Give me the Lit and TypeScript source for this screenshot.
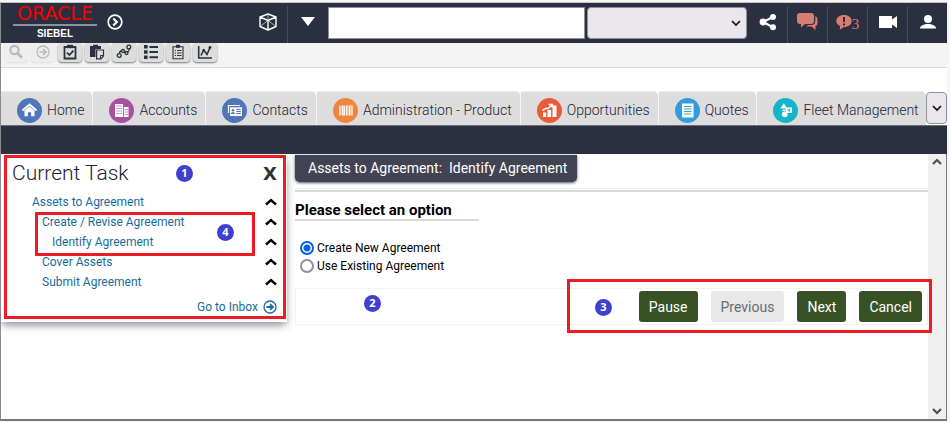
import { LitElement, html, css, svg, nothing } from "lit";
import { customElement, property, state } from "lit/decorators.js";
import { classMap } from "lit/directives/class-map.js";

const chevronUp = html`<svg width="12" height="8" viewBox="0 0 12 8" aria-hidden="true">
  <path d="M1 6.5 6 2l5 4.500" fill="none" stroke="#000" stroke-width="2.400" />
</svg>`;

const chevron = (down: boolean) => html`<svg width="10" height="8" viewBox="0 0 10 8" aria-hidden="true">
  <path d=${down ? "M1 2l4 4 4-4" : "M1 6l4-4 4 4"} fill="none" stroke="#505050" stroke-width="2.200" />
</svg>`;

const toolIcons = {
  search: svg`<circle cx="6.500" cy="6" r="4.200" fill="none" stroke="currentColor" stroke-width="2.200"/><path d="M9.500 9.200l4.500 4.600" stroke="currentColor" stroke-width="2.800"/>`,
  go: svg`<circle cx="8" cy="8" r="6" fill="none" stroke="currentColor" stroke-width="1.300"/><path d="M4.500 8h6M8 5.200 11 8l-3 2.800" fill="none" stroke="currentColor" stroke-width="1.600"/>`,
  check: svg`<path d="M2.500 3h11v11.500h-11z" fill="none" stroke="currentColor" stroke-width="1.800"/><path d="M5 .800h6v3.400H5z" fill="currentColor"/><path d="M5 8.600l2.400 2.500L11.400 6.600" fill="none" stroke="currentColor" stroke-width="1.700"/>`,
  paste: svg`<path d="M1 2h3V.800h5V2h3v3H6.500v8H1z" fill="currentColor"/><path d="M7.600 6h6.900v6l-2.600 2.800H7.600z" fill="#ddd" stroke="currentColor" stroke-width="1.200"/><path d="M11.500 14.500v-3h3" fill="none" stroke="currentColor"/>`,
  flow: svg`<g fill="none" stroke="currentColor" stroke-width="1.300"><circle cx="3.200" cy="11.500" r="1.900"/><circle cx="7" cy="7" r="1.500"/><circle cx="10.500" cy="9" r="1.500"/><circle cx="12.800" cy="3" r="1.900"/><path d="M3.500 9.500C3.500 7.500 4.500 7 5.500 7M8 8.200l1.200.500M11.600 8c1.800-.800 1.600-2 1.400-3"/></g>`,
  list: svg`<g fill="currentColor"><path d="M1 1h3.600v3.600H1zM1 6.200h3.600v3.600H1zM1 11.400h3.600V15H1zM6.400 2h8.600v2H6.400zM6.400 7.100h8.600v2H6.400zM6.400 12.300h8.600v2H6.400z"/></g>`,
  report: svg`<path d="M3 2.700h10v12H3z" fill="none" stroke="currentColor" stroke-width="1.100"/><path d="M6 .800h4v3H6z" fill="currentColor"/><path d="M4.800 6.500h1.200M7 6.500h4.500M4.800 9h1.200M7 9h4.500M4.800 11.500h1.200M7 11.500h4.500" stroke="currentColor"/>`,
  chart: svg`<path d="M1.700 2v12H15" fill="none" stroke="currentColor" stroke-width="1.600"/><path d="M4 11.500 6.700 6l3.300 4.500L13 3.500" fill="none" stroke="currentColor" stroke-width="1.600"/><circle cx="13" cy="3.500" r="1.400" fill="currentColor"/><circle cx="6.700" cy="6.200" r="1.300" fill="currentColor"/>`,
};

const tabIcons = {
  home: svg`<path d="M5.500 12.500 12.500 6.500l7 6" fill="none" stroke="#fff" stroke-width="1.900"/><path d="M7.500 12.600 12.500 8.500l5 4.100v5.700h-3.400v-4.100h-3.200v4.100H7.500z" fill="#fff"/>`,
  accounts: svg`<path d="M6 6h8v13H6zM14.800 9h4.700v10h-4.700z" fill="#fff"/><path d="M7.500 8h1.200M9.500 8h1.200M11.500 8h1.200M7.500 10.500h1.200M9.500 10.500h1.200M11.500 10.500h1.200M7.500 13h1.200M9.500 13h1.200M11.500 13h1.200M7.500 15.500h1.200M9.500 15.500h1.200M11.500 15.500h1.200M15.600 11.500h1.100M17.500 11.500h1.100M15.600 14h1.100M17.500 14h1.100M15.600 16.500h1.100M17.500 16.500h1.100" stroke="#a8529f" stroke-width="1"/>`,
  contacts: svg`<path d="M6.500 15V7.500H18" fill="none" stroke="#fff" stroke-width="1.200"/><path d="M8 9.300h12v8.700H8z" fill="#fff"/><circle cx="10.900" cy="12.300" r="1.300" fill="#4f76b9"/><path d="M9 16c0-2.800 3.800-2.800 3.800 0zM14.300 11h4.400v1h-4.400zM14.300 13h4.400v1h-4.400zM14.300 15h4.400v1h-4.400z" fill="#4f76b9"/>`,
  product: svg`<path d="M7 7.500v10M9.300 7.500v10M11.300 7.500v10M13.600 7.500v10M16.500 7.500v10M19 7.500v10" stroke="#fff" stroke-width="1.300"/><path d="M10.300 7.500v10M15 7.500v10M17.800 7.500v10" stroke="#fff" stroke-width=".600"/>`,
  opportunities: svg`<path d="M6 14.500h3.200v4.500H6zM10.500 12h3.600v7h-3.600zM15.500 7.500h4V19h-4z" fill="#fff"/><path d="M5.500 12.500 9 10.200l2 .300L15 7M11.500 6.500h4v3" fill="none" stroke="#fff" stroke-width="1.500"/>`,
  quotes: svg`<path d="M7 5.500h11.500v14H7z" fill="#fff"/><path d="M9 8.500h7.500M9 11h7.500M9 13.500h7.500M9 16h7.500" stroke="#349bdc" stroke-width="1.100"/>`,
  fleet: svg`<path d="M10.800 5.300l3.400 5.200H7.400z" fill="#fff"/><path d="M13 9.500h6v5.500h-6z" fill="#fff"/><path d="M14.500 11h2.600v2.300h-2.600z" fill="#14b5cb"/><circle cx="11.800" cy="16.300" r="2.900" fill="#fff"/><path d="M9.500 12.300h6" stroke="#fff" stroke-width="1.600"/>`,
};

type ToolName = keyof typeof toolIcons;
type TabName = keyof typeof tabIcons;

@customElement("siebel-header")
class SiebelHeader extends LitElement {
  static styles = css`
    :host { display: flex; height: 40px; background: #2a3040; color: #fff; }
    .brand { display: flex; flex: none; align-items: center; width: 246px; box-sizing: border-box; padding-left: 12px; padding-bottom: 2px; gap: 10px; }
    .logo { display: flex; flex-direction: column; align-items: center; width: 84px; padding-top: 2px; }
    .oracle { font: 19px/18px "DejaVu Sans", sans-serif; color: #f80000; }
    .siebel { align-self: stretch; border-top: 2px solid #8d929e; margin-top: 2px; text-align: center; font: bold 10px/16px "Liberation Sans", sans-serif; }
    button { all: unset; box-sizing: border-box; display: flex; align-items: center; justify-content: center; cursor: pointer; }
    .cell { flex: none; width: 40px; height: 37px; margin-top: 3px; padding-bottom: 6px; border-left: 1px solid #454c5c; }
    .plain { border-left-color: transparent; }
    .alert { color: #d87d71; font: 15px/16px "Liberation Serif", serif; }
    .count { margin-top: 4px; }
    .query { flex: 1; min-width: 0; box-sizing: border-box; height: 32px; margin: 4px 2px 0 1px; border: 1px solid #8f8f9d; background: #fff; }
    .scope { flex: none; box-sizing: border-box; width: 160px; height: 32px; margin-top: 4px; }
    .picker { position: relative; display: flex; }
    select { appearance: none; border: 1px solid #8f8f9d; border-radius: 4px; background: #e9e7ec; padding: 0 24px 0 8px; }
    .arrow { position: absolute; right: 6px; top: 17px; pointer-events: none; }
  `;

  render() {
    return html`
      <div class="brand">
        <div class="logo"><span class="oracle">ORACLE</span><span class="siebel">SIEBEL</span></div>
        <button aria-label="Expand">
          <svg width="16" height="16" viewBox="0 0 16 16"><circle cx="8" cy="8" r="6.800" fill="none" stroke="#fff" stroke-width="1.700"/><path d="M6.300 4.500 9.800 8l-3.500 3.500" fill="none" stroke="#fff" stroke-width="2.200"/></svg>
        </button>
      </div>
      <button class="cell plain" aria-label="Products">
        <svg width="20" height="18" viewBox="0 0 20 18"><path d="M10 1 18 4v9.500L10 17l-8-3.500V4zM2 4l8 3.500L18 4M10 7.500V17" fill="none" stroke="#fff" stroke-width="1.400" stroke-linejoin="round"/><path d="M10 1v6.500M2 13.500l8-6 8 6" fill="none" stroke="#fff" stroke-width=".600"/></svg>
      </button>
      <button class="cell" aria-label="Menu">
        <svg width="14" height="9" viewBox="0 0 14 9"><path d="M0 0h14L7 9z" fill="#fff"/></svg>
      </button>
      <input class="query" type="text" aria-label="Search" />
      <div class="picker">
        <select class="scope" aria-label="Search in"><option></option></select>
        <svg class="arrow" width="10" height="7" viewBox="0 0 10 7"><path d="M1 1l4 4 4-4" fill="none" stroke="#111" stroke-width="1.700"/></svg>
      </div>
      <button class="cell plain" aria-label="Share">
        <svg width="18" height="18" viewBox="0 0 18 18"><path d="M14 4 4 9l10 5.200" fill="none" stroke="#fff" stroke-width="2.200"/><g fill="#fff"><circle cx="14" cy="4" r="3"/><circle cx="4" cy="9" r="3.400"/><circle cx="14" cy="14.200" r="3"/></g></svg>
      </button>
      <button class="cell alert" aria-label="Messages">
        <svg width="21" height="17" viewBox="0 0 21 17"><path d="M3 0h11q3 0 3 3v5q0 3-3 3H8l-4 3.500V11H3Q0 11 0 8V3Q0 0 3 0zM18.300 3q2.200.800 2.200 3v4q0 2.500-2 2.900V17l-4-3.500H9.300l1.700-1.400h4q3.300-.500 3.300-4z" fill="currentColor"/></svg>
      </button>
      <button class="cell alert" aria-label="Notifications">
        <svg width="16" height="16" viewBox="0 0 16 16"><path d="M8 1c4.400 0 7.700 2.600 7.700 6S12.400 13 8 13L3.800 15.800 4 12C1.700 11 .300 9.200.300 7 .300 3.600 3.600 1 8 1z" fill="currentColor"/><path d="M8 3v5M8 9.500v2" stroke="#2a3040" stroke-width="2"/></svg><span class="count">3</span>
      </button>
      <button class="cell" aria-label="Video">
        <svg width="20" height="14" viewBox="0 0 20 14"><path d="M1 1h13v3.500l5-3.500v12l-5-3.500V13H1z" fill="#fff"/></svg>
      </button>
      <button class="cell" aria-label="User">
        <svg width="18" height="16" viewBox="0 0 18 16"><circle cx="9" cy="5" r="4" fill="#fff"/><path d="M1 14.500c0-6 16-6 16 0z" fill="#fff"/></svg>
      </button>
    `;
  }
}

@customElement("tool-strip")
class ToolStrip extends LitElement {
  static styles = css`
    :host { display: flex; gap: 3px; height: 24px; box-sizing: content-box; padding-left: 3px; background: #f4f4f4; border-bottom: 1px solid #ddd; }
    button { all: unset; box-sizing: border-box; display: flex; flex: none; align-items: center; justify-content: center; width: 24px; height: 19px; padding-bottom: 2px; border-radius: 4px; background: #ddd; box-shadow: 0 1px 2px #777; color: #2a3040; cursor: pointer; }
    button:disabled { background: #eee; box-shadow: 0 1px 2px #ddd; color: #bbb; cursor: default; }
  `;

  @property({ attribute: false }) tools: { name: ToolName; label: string; off?: boolean }[] = [];

  render() {
    return this.tools.map(
      (t) => html`<button aria-label=${t.label} ?disabled=${t.off}>
        <svg width="16" height="16" viewBox="0 0 16 16">${toolIcons[t.name]}</svg>
      </button>`
    );
  }
}

@customElement("screen-tabs")
class ScreenTabs extends LitElement {
  static styles = css`
    :host { display: flex; height: 34px; margin-top: 23px; border-bottom: 1px solid #6b6d78; font: 300 14px/20px Roboto, sans-serif; }
    a { display: flex; flex: none; box-sizing: border-box; align-items: center; gap: 5px; padding: 3px 8px 0 16px; border-right: 1px solid #f4f4f4; border-top: 1px solid #eee; border-radius: 0 5px 0 0; background: #ddd; color: #1c2233; text-decoration: none; white-space: nowrap; }
    a.last { flex: 1 1 0; min-width: 0; padding-right: 0; border-right: 0; }
    .more { position: relative; flex: none; display: flex; }
    svg { flex: none; }
    select { appearance: none; box-sizing: border-box; width: 21px; height: 32px; margin-top: 1px; border: 1px solid #8f8f9d; border-radius: 4px; background: #e9e7ec; padding: 0; }
    .arrow { position: absolute; left: 6px; top: 14px; pointer-events: none; }
  `;

  @property({ attribute: false }) tabs: { icon: TabName; label: string; color: string }[] = [];

  render() {
    return html`
      ${this.tabs.map(
        (t, i) => html`<a href="#" class=${classMap({ last: i === this.tabs.length - 1 })}>
          <svg width="25" height="25" viewBox="0 0 25 25"><circle cx="12.500" cy="12.500" r="12.500" fill=${t.color} />${tabIcons[t.icon]}</svg>
          <span>${t.label}</span>
        </a>`
      )}
      <div class="more">
        <select aria-label="More screens"><option></option></select>
        <svg class="arrow" width="10" height="7" viewBox="0 0 10 7"><path d="M1 1l4 4 4-4" fill="none" stroke="#111" stroke-width="1.700"/></svg>
      </div>
    `;
  }
}

@customElement("step-marker")
class StepMarker extends LitElement {
  static styles = css`
    :host { display: block; width: 17px; height: 17px; border-radius: 50%; background: #3f3fd0; color: #fff; text-align: center; font: bold 11px/16px "Noto Sans", sans-serif; }
  `;
  render() {
    return html`<slot></slot>`;
  }
}

@customElement("task-pane")
class TaskPane extends LitElement {
  static styles = css`
    :host { position: relative; display: block; flex: none; align-self: flex-start; box-sizing: border-box; width: 286px; margin-top: 1px; padding: 0 1px 3px 3px; background: #fff; box-shadow: 0 4px 8px -1px #8a8c9c; font: 12px/20px Roboto, sans-serif; }
    .frame { box-sizing: border-box; border: 3px solid #ed1c24; padding: 2px 6px 0 5px; }
    .head { display: flex; justify-content: space-between; align-items: center; height: 27px; margin-bottom: 5px; }
    h2 { margin: 0; font: 300 21px/27px Roboto, sans-serif; color: #1c2233; }
    .close { all: unset; font: bold 18px/24px "DejaVu Sans", sans-serif; color: #333; cursor: pointer; }
    ul { list-style: none; margin: 0; padding: 0 0 0 20px; }
    ul ul { padding-left: 10px; }
    .row { display: flex; justify-content: space-between; align-items: center; }
    a { color: #176c9c; text-decoration: none; }
    button { all: unset; display: flex; cursor: pointer; }
    .inbox { display: flex; align-items: center; justify-content: flex-end; gap: 5px; margin-top: 6px; line-height: 18px; }
    .callout { position: absolute; left: 34px; top: 57px; box-sizing: border-box; width: 220px; height: 44px; border: 3px solid #ed1c24; pointer-events: none; }
    .one { position: absolute; left: 175px; top: 10px; }
    .four { position: absolute; left: 179px; top: 9px; }
  `;

  row(label: string, children: unknown = nothing) {
    return html`<li>
      <div class="row"><a href="#">${label}</a><button aria-label="Collapse ${label}">${chevronUp}</button></div>
      ${children}
    </li>`;
  }

  render() {
    return html`
      <div class="frame">
        <div class="head"><h2>Current Task</h2><button class="close" aria-label="Close">X</button></div>
        <ul>
          ${this.row("Assets to Agreement", html`<ul>
            ${this.row("Create / Revise Agreement", html`<ul>${this.row("Identify Agreement")}</ul>`)}
            ${this.row("Cover Assets")}
            ${this.row("Submit Agreement")}
          </ul>`)}
        </ul>
        <a class="inbox" href="#">Go to Inbox
          <svg width="14" height="14" viewBox="0 0 14 14"><circle cx="7" cy="7" r="6" fill="none" stroke="currentColor" stroke-width="1.300"/><path d="M3.500 7h5M7 4.200 10 7 7 9.800" fill="none" stroke="currentColor" stroke-width="1.800"/></svg>
        </a>
      </div>
      <step-marker class="one">1</step-marker>
      <div class="callout"><step-marker class="four">4</step-marker></div>
    `;
  }
}

@customElement("task-view")
class TaskView extends LitElement {
  static styles = css`
    :host { display: block; flex: 1; min-width: 0; padding: 1px 0 0 8px; font: 12px/18px Roboto, sans-serif; color: #000; }
    .title { display: inline-block; margin: 0; padding: 0 10px 0 13px; background: #414352; border-radius: 0 0 5px 5px; box-shadow: 0 1px 3px #555; color: #fff; font: 14px/27px Roboto, sans-serif; white-space: pre; vertical-align: top; }
    .rule { height: 1px; margin-top: 6px; border-top: 1px solid #f0f0f0; border-bottom: 2px solid #d9d9d9; }
    h3 { width: 184px; box-sizing: border-box; margin: 10px 0 0; border-bottom: 2px solid #d9d9d9; font: bold 15px/17px Roboto, sans-serif; white-space: nowrap; }
    fieldset { border: 0; margin: 18px 0 0; padding: 0 5px; }
    label { display: flex; align-items: center; gap: 3px; }
    input { appearance: none; box-sizing: border-box; width: 14px; height: 14px; margin: 0; border: 2px solid #8f8f9d; border-radius: 50%; background: #fff; }
    input:checked { border-color: #0561e0; background: radial-gradient(circle, #0561e0 3px, #fff 4px); }
    .bar { position: relative; display: flex; justify-content: flex-end; gap: 13px; margin-top: 13px; padding: 2px 5px; border: 1px solid #f2f2f2; }
    button { box-sizing: border-box; height: 31px; margin: 0; padding: 0 10px; border: 0; border-radius: 3px; background: #375225; color: #fff; font: 14px/20px Roboto, sans-serif; cursor: pointer; }
    button:disabled { background: #e8e8e8; color: #6b6b6b; cursor: default; }
    .callout { position: absolute; right: -5px; top: -10px; box-sizing: border-box; width: 365px; height: 54px; border: 3px solid #ed1c24; pointer-events: none; z-index: 1; }
    .three { position: absolute; left: 25px; top: 17px; }
    .two { position: absolute; left: 68px; top: 6px; }
  `;

  @state() choice = "new";

  option(value: string, label: string) {
    return html`<label><input type="radio" name="agreement" .checked=${this.choice === value} @change=${() => (this.choice = value)} />${label}</label>`;
  }

  render() {
    return html`
      <h2 class="title">Assets to Agreement:  Identify Agreement</h2>
      <div class="rule"></div>
      <h3 id="prompt">Please select an option</h3>
      <fieldset aria-labelledby="prompt">
        ${this.option("new", "Create New Agreement")}
        ${this.option("existing", "Use Existing Agreement")}
      </fieldset>
      <div class="bar">
        <step-marker class="two">2</step-marker>
        <button>Pause</button>
        <button disabled>Previous</button>
        <button>Next</button>
        <button>Cancel</button>
        <div class="callout"><step-marker class="three">3</step-marker></div>
      </div>
    `;
  }
}

@customElement("app-root")
class AppRoot extends LitElement {
  static styles = css`
    :host { display: flex; flex-direction: column; box-sizing: border-box; min-height: 100vh; padding: 2px 3px 1px 0; background: #f6f6f6; }
    .window { flex: 1; display: flex; flex-direction: column; border: 1px solid #8a8a90; border-top-color: #c4c4c4; border-bottom: 2px solid #77777a; border-right: 0; background: #fff; }
    .band { height: 28px; background: #2a3040; }
    .body { flex: 1; display: flex; border-right: 1px solid #77777f; }
    .scroll { flex: none; box-sizing: border-box; width: 18px; display: flex; flex-direction: column; justify-content: space-between; align-items: center; padding: 4px 0; background: #f0f0f0; }
  `;

  tools = [
    { name: "search", label: "Search", off: true },
    { name: "go", label: "Go", off: true },
    { name: "check", label: "Tasks" },
    { name: "paste", label: "Paste" },
    { name: "flow", label: "Process" },
    { name: "list", label: "List" },
    { name: "report", label: "Reports" },
    { name: "chart", label: "Charts" },
  ];

  tabs = [
    { icon: "home", label: "Home", color: "#4f76b9" },
    { icon: "accounts", label: "Accounts", color: "#a8529f" },
    { icon: "contacts", label: "Contacts", color: "#4f76b9" },
    { icon: "product", label: "Administration - Product", color: "#ee8640" },
    { icon: "opportunities", label: "Opportunities", color: "#ea5b37" },
    { icon: "quotes", label: "Quotes", color: "#349bdc" },
    { icon: "fleet", label: "Fleet Management", color: "#14b5cb" },
  ];

  render() {
    return html`
      <div class="window">
        <siebel-header></siebel-header>
        <tool-strip .tools=${this.tools}></tool-strip>
        <screen-tabs .tabs=${this.tabs}></screen-tabs>
        <div class="band"></div>
        <div class="body">
          <task-pane></task-pane>
          <task-view></task-view>
          <div class="scroll">${chevron(false)}${chevron(true)}</div>
        </div>
      </div>
    `;
  }
}
